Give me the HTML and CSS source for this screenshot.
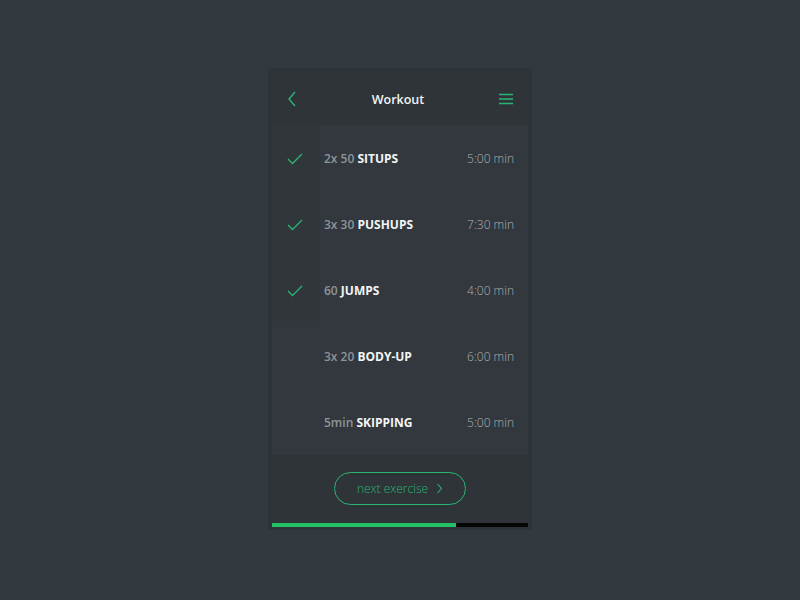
FILE: index.html
```html
<!DOCTYPE html>
<html>
<head>
<meta charset="utf-8">
<link rel="stylesheet" href="styles.css">
</head>
<body>
<div class="stage">
  <div class="card">
    <div class="header">
      <svg class="icon back" width="12" height="18" viewBox="0 0 12 18"><path d="M9 2 L3 9 L9 16" fill="none" stroke="#2bb574" stroke-width="1.4"/></svg>
      <div class="title">Workout</div>
      <svg class="icon menu" width="16" height="14" viewBox="0 0 16 14"><path d="M1 2.5H15M1 7H15M1 11.5H15" stroke="#2bb574" stroke-width="1.4"/></svg>
    </div>
    <div class="list">
      <div class="checkcol"></div>
      <div class="row done">
        <span class="check"><svg width="16" height="12" viewBox="0 0 16 12"><path d="M1 6 L5.5 10.5 L15 1" fill="none" stroke="#2bb574" stroke-width="1.3"/></svg></span>
        <span class="name"><span class="qty">2x 50</span> SITUPS</span>
        <span class="time">5:00 min</span>
      </div>
      <div class="row done">
        <span class="check"><svg width="16" height="12" viewBox="0 0 16 12"><path d="M1 6 L5.5 10.5 L15 1" fill="none" stroke="#2bb574" stroke-width="1.3"/></svg></span>
        <span class="name"><span class="qty">3x 30</span> PUSHUPS</span>
        <span class="time">7:30 min</span>
      </div>
      <div class="row done">
        <span class="check"><svg width="16" height="12" viewBox="0 0 16 12"><path d="M1 6 L5.5 10.5 L15 1" fill="none" stroke="#2bb574" stroke-width="1.3"/></svg></span>
        <span class="name"><span class="qty">60</span> JUMPS</span>
        <span class="time">4:00 min</span>
      </div>
      <div class="row">
        <span class="check"></span>
        <span class="name"><span class="qty">3x 20</span> BODY-UP</span>
        <span class="time">6:00 min</span>
      </div>
      <div class="row">
        <span class="check"></span>
        <span class="name"><span class="qty">5min</span> SKIPPING</span>
        <span class="time">5:00 min</span>
      </div>
    </div>
    <div class="footer">
      <div class="btn">next exercise <svg width="7" height="11" viewBox="0 0 7 11"><path d="M1.5 1 L5.5 5.5 L1.5 10" fill="none" stroke="#2bb574" stroke-width="1.1"/></svg></div>
    </div>
    <div class="progress"><div class="fill" style="width: 71.9%"></div></div>
  </div>
</div>
</body>
</html>
```

FILE: styles.css
```css
html, body {
  margin: 0;
  padding: 0;
  background: #333a3f;
  font-family: "Open Sans", "Liberation Sans", sans-serif;
}
.stage {
  width: 800px;
  height: 600px;
  display: flex;
  justify-content: center;
  padding-top: 68px;
  box-sizing: border-box;
}
.card {
  width: 264px;
  height: 462px;
  background: #2e3438;
  display: flex;
  flex-direction: column;
  align-items: center;
}
.header {
  width: 256px;
  height: 57px;
  display: flex;
  align-items: center;
  justify-content: space-between;
  padding: 5px 14px 0 14px;
  box-sizing: border-box;
}
.title {
  color: #f2f4f5;
  font-weight: 600;
  font-size: 12.5px;
}
.list {
  position: relative;
  width: 256px;
  height: 330px;
  background: #32383d;
}
.checkcol {
  position: absolute;
  left: 0;
  top: 0;
  width: 48px;
  height: 196px;
  background: #303639;
}
.row {
  position: relative;
  height: 66px;
  display: flex;
  align-items: center;
  padding: 0 14px 0 15px;
  box-sizing: border-box;
}
.check {
  width: 37px;
  display: flex;
  align-items: center;
  padding-top: 1px;
}
.name {
  flex: 1;
  color: #f3f5f6;
  font-size: 12px;
  font-weight: 700;
}
.qty {
  color: #8e9499;
  font-weight: 600;
}
.time {
  color: #aeb3b7;
  font-size: 12px;
  font-weight: 300;
}
.footer {
  width: 256px;
  height: 67px;
  display: flex;
  align-items: center;
  justify-content: center;
}
.btn {
  width: 132px;
  height: 33px;
  border: 1px solid #2bb574;
  border-radius: 17px;
  box-sizing: border-box;
  display: flex;
  align-items: center;
  justify-content: center;
  gap: 8px;
  color: #2bb574;
  font-size: 12px;
  font-weight: 300;
}
.progress {
  width: 256px;
  height: 4px;
  background: #050606;
  margin-top: 1px;
}
.fill {
  height: 100%;
  background: #25c066;
}
```
